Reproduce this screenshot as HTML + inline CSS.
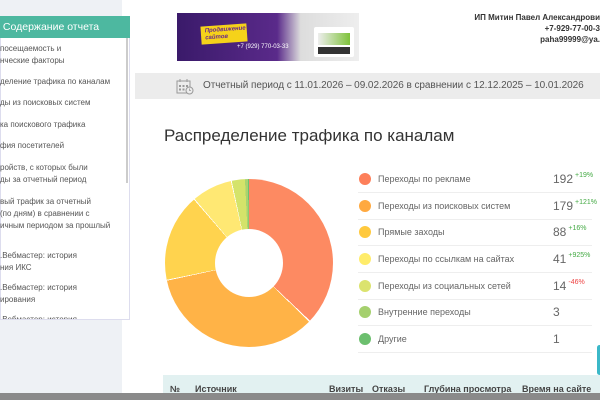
<!DOCTYPE html>
<html><head><meta charset="utf-8"><style>
*{margin:0;padding:0;box-sizing:border-box}
body{width:600px;height:400px;overflow:hidden;background:#fff;font-family:"Liberation Sans","DejaVu Sans",sans-serif;position:relative;color:#555}
.abs{position:absolute}
#leftbg{left:0;top:0;width:122px;height:400px;background:#eef1f5}
#panel{left:0;top:16px;width:130px;height:304px;background:#fff;border:1px solid #dde;overflow:hidden}
#ph{left:0;top:16px;width:130px;height:22px;background:#4db8a0;color:#fff;font-size:10.5px;line-height:22px;white-space:nowrap}
.it{position:absolute;left:0;font-size:8px;line-height:12px;color:#555;white-space:nowrap}
#sb{left:126px;top:38px;width:2px;height:145px;background:#ccc}
.legend{position:absolute;left:358px;width:234px;height:26.5px;border-bottom:1px solid #eee;font-size:9px;color:#666}
.dot{position:absolute;left:1px;top:7px;width:12px;height:12px;border-radius:50%}
.lt{position:absolute;left:20px;top:8px}
.num{position:absolute;left:195px;top:6px;font-size:12px;color:#666}
.pc{font-size:7px;color:#4a4;vertical-align:6px;margin-left:2px}
.th{position:absolute;top:384px;font-size:9px;font-weight:bold;color:#444}
</style></head><body>
<div class="abs" id="leftbg"></div>
<div class="abs" id="panel"></div>
<div class="abs" id="ph">&nbsp;Содержание отчета</div>
<div class="abs" id="sb"></div>
<div class="it" style="top:43px">посещаемость и<br>нческие факторы</div>
<div class="it" style="top:76px">деление трафика по каналам</div>
<div class="it" style="top:97px">ды из поисковых систем</div>
<div class="it" style="top:119px">ка поискового трафика</div>
<div class="it" style="top:140px">фия посетителей</div>
<div class="it" style="top:162px">ройств, с которых были<br>ды за отчетный период</div>
<div class="it" style="top:196px">вый трафик за отчетный<br>(по дням) в сравнении с<br>ичным периодом за прошлый</div>
<div class="it" style="top:250px">.Вебмастер: история<br>ния ИКС</div>
<div class="it" style="top:282px">.Вебмастер: история<br>ирования</div>
<div class="it" style="top:314px;height:5px;overflow:hidden">.Вебмастер: история</div>

<div class="abs" style="left:177px;top:13px;width:182px;height:48px;background:linear-gradient(90deg,#3a1a6a,#5a2a8a 55%,#ddd 68%,#eee);overflow:hidden">
 <div class="abs" style="left:24px;top:12px;width:46px;height:18px;background:#f5d21a;transform:rotate(-4deg);font-size:6px;color:#6a2a8a;font-style:italic;font-weight:bold;line-height:7px;padding:2px 4px">Продвижение<br>сайтов</div>
 <div class="abs" style="left:60px;top:31px;font-size:6px;color:#fff">+7 (929) 770-03-33</div>
 <div class="abs" style="left:137px;top:14px;width:40px;height:30px;background:#fff;border-radius:2px"><div style="margin:6px 4px 0;height:12px;background:linear-gradient(90deg,#eee,#7ec23a)"></div><div style="margin:2px 4px;height:7px;background:#333"></div></div>
</div>

<div class="abs" style="right:0;top:12px;font-size:8px;font-weight:bold;color:#333;text-align:right;line-height:11px;white-space:nowrap">ИП Митин Павел Александрови<br>+7-929-77-00-3<br>paha99999@ya.</div>

<div class="abs" style="left:135px;top:73px;width:465px;height:26px;background:#ececec"></div>
<svg class="abs" style="left:176px;top:78px" width="18" height="17" viewBox="0 0 18 17"><rect x="1" y="3" width="13" height="12" fill="none" stroke="#999" stroke-width="1"/><line x1="4" y1="1" x2="4" y2="4" stroke="#999"/><line x1="11" y1="1" x2="11" y2="4" stroke="#999"/><g fill="#999"><rect x="3" y="7" width="2" height="2"/><rect x="6.5" y="7" width="2" height="2"/><rect x="10" y="7" width="2" height="2"/><rect x="3" y="10.5" width="2" height="2"/><rect x="6.5" y="10.5" width="2" height="2"/></g><circle cx="13.5" cy="12.5" r="3.5" fill="#ececec" stroke="#999"/><path d="M13.5 10.5v2h1.5" fill="none" stroke="#999" stroke-width=".8"/></svg>
<div class="abs" style="left:203px;top:80px;font-size:10px;letter-spacing:-0.05px;color:#555;white-space:nowrap">Отчетный период с 11.01.2026 – 09.02.2026 в сравнении с 12.12.2025 – 10.01.2026</div>

<div class="abs" style="left:164px;top:126px;font-size:17px;color:#333;white-space:nowrap">Распределение трафика по каналам</div>

<div class="abs" style="left:165px;top:179px;width:168px;height:168px;border-radius:50%;background:conic-gradient(#fd8a62 0 37.07%,#fff 37.07% 37.3%,#ffb347 37.3% 71.62%,#fff 71.62% 71.8%,#ffd34e 71.8% 88.61%,#fff 88.61% 88.8%,#ffe873 88.8% 96.53%,#fff 96.53% 96.7%,#d4e36a 96.7% 99.23%,#a9d36e 99.23% 99.81%,#6cc070 99.81% 100%)"></div>
<div class="abs" style="left:215px;top:229px;width:68px;height:68px;border-radius:50%;background:#fff"></div>

<div class="legend" style="top:166px"><div class="dot" style="background:#fd7f5a"></div><div class="lt">Переходы по рекламе</div><div class="num">192<span class="pc">+19%</span></div></div>
<div class="legend" style="top:193px"><div class="dot" style="background:#ffa940"></div><div class="lt">Переходы из поисковых систем</div><div class="num">179<span class="pc">+121%</span></div></div>
<div class="legend" style="top:219px"><div class="dot" style="background:#ffc93e"></div><div class="lt">Прямые заходы</div><div class="num">88<span class="pc">+16%</span></div></div>
<div class="legend" style="top:246px"><div class="dot" style="background:#ffec6a"></div><div class="lt">Переходы по ссылкам на сайтах</div><div class="num">41<span class="pc">+925%</span></div></div>
<div class="legend" style="top:273px"><div class="dot" style="background:#dbe36e"></div><div class="lt">Переходы из социальных сетей</div><div class="num">14<span class="pc" style="color:#e44">-46%</span></div></div>
<div class="legend" style="top:299px"><div class="dot" style="background:#a5d06e"></div><div class="lt">Внутренние переходы</div><div class="num">3</div></div>
<div class="legend" style="top:326px"><div class="dot" style="background:#6cbf6e"></div><div class="lt">Другие</div><div class="num">1</div></div>

<div class="abs" style="left:597px;top:345px;width:5px;height:30px;background:#3bb8c8;border-radius:3px"></div>
<div class="abs" style="left:163px;top:375px;width:437px;height:20px;background:#e2f1f1"></div>
<div class="th" style="left:170px">№</div>
<div class="th" style="left:195px">Источник</div>
<div class="th" style="left:329px">Визиты</div>
<div class="th" style="left:372px">Отказы</div>
<div class="th" style="left:424px">Глубина просмотра</div>
<div class="th" style="left:522px">Время на сайте</div>
<div class="abs" style="left:0;top:393px;width:600px;height:7px;background:#8a8a8a"></div>
</body></html>
